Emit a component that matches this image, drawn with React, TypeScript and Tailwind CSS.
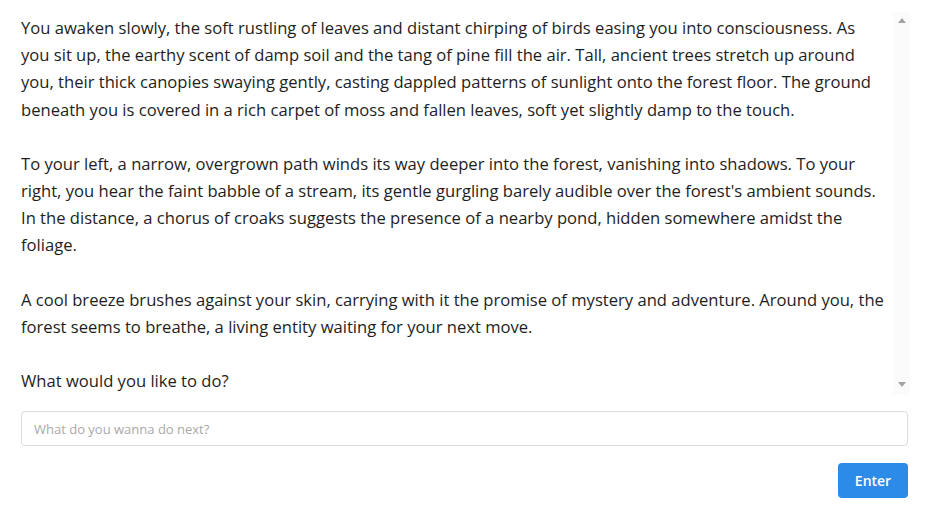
import React from "react";

const paragraphs = [
  "You awaken slowly, the soft rustling of leaves and distant chirping of birds easing you into consciousness. As you sit up, the earthy scent of damp soil and the tang of pine fill the air. Tall, ancient trees stretch up around you, their thick canopies swaying gently, casting dappled patterns of sunlight onto the forest floor. The ground beneath you is covered in a rich carpet of moss and fallen leaves, soft yet slightly damp to the touch.",
  "To your left, a narrow, overgrown path winds its way deeper into the forest, vanishing into shadows. To your right, you hear the faint babble of a stream, its gentle gurgling barely audible over the forest's ambient sounds. In the distance, a chorus of croaks suggests the presence of a nearby pond, hidden somewhere amidst the foliage.",
  "A cool breeze brushes against your skin, carrying with it the promise of mystery and adventure. Around you, the forest seems to breathe, a living entity waiting for your next move.",
  "What would you like to do?",
];

export default function App() {
  return (
    <div
      className="w-[928px] h-[522px] bg-white pl-[21px] pr-[20px] pt-[12px] text-[#1e1e1e]"
      style={{ fontFamily: '"Open Sans", "Noto Sans", sans-serif' }}
    >
      <div className="flex h-[383px] -mr-[2px]">
        <div className="flex-1 overflow-hidden pt-[2px] pr-[7px] text-[16.6px] leading-[27.2px]">
          {paragraphs.map((p, i) => (
            <p key={i} className="mb-[27px]">
              {p}
            </p>
          ))}
        </div>
        <div className="w-[17px] bg-[#fbfbfb] flex flex-col justify-between items-center pt-[6px] pb-[8px]">
          <svg width="8" height="5" viewBox="0 0 8 5">
            <polygon points="4,0 8,5 0,5" fill="#a3a3a3" />
          </svg>
          <svg width="8" height="5" viewBox="0 0 8 5">
            <polygon points="0,0 8,0 4,5" fill="#a3a3a3" />
          </svg>
        </div>
      </div>
      <input
        className="mt-[16px] block w-full h-[35px] rounded-[4px] border border-[#dcdcdc] px-[12px] text-[13px] text-[#333] placeholder:text-[#a9a9a9] outline-none"
        placeholder="What do you wanna do next?"
      />
      <div className="flex justify-end mt-[17px]">
        <button className="w-[70px] h-[35px] rounded-[4px] bg-[#2b8be6] text-white text-[14px] font-semibold">
          Enter
        </button>
      </div>
    </div>
  );
}
